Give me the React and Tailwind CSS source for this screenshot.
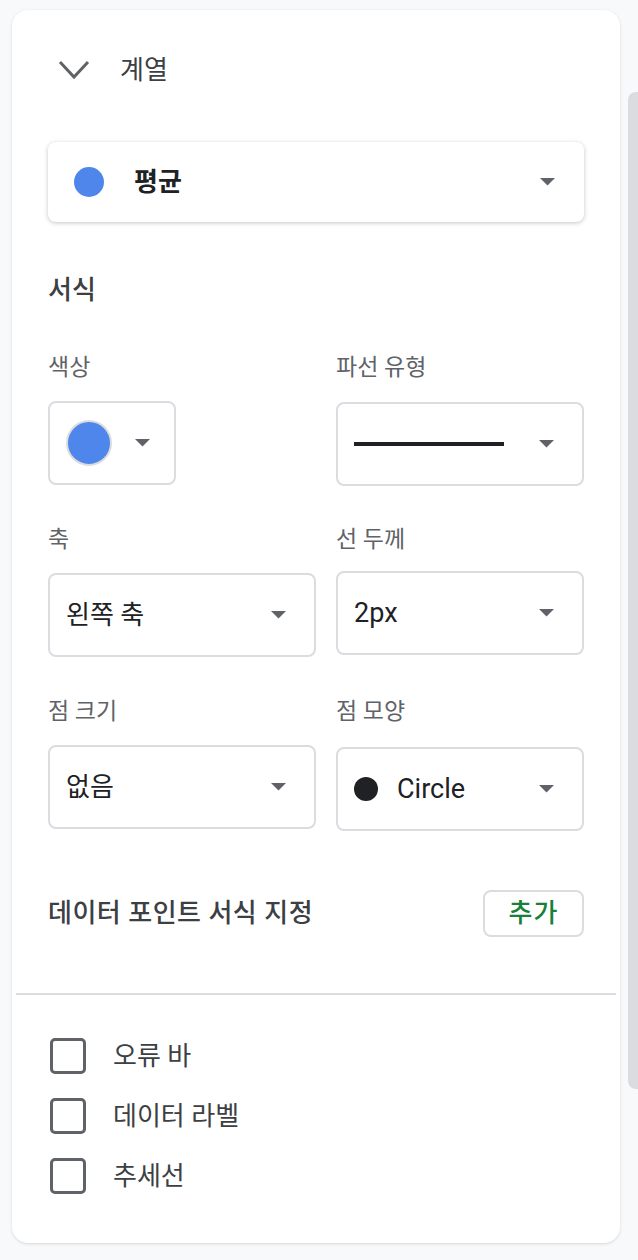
import React from "react";

const Tri = () => (
  <svg width="15" height="8" viewBox="0 0 15 8" className="shrink-0">
    <polygon points="0,0 15,0 7.5,7.5" fill="#5f6368" />
  </svg>
);

const Label = ({ children }) => (
  <div className="h-7 leading-7 text-[23px] text-[#5f6368]">{children}</div>
);

const Box = ({ children, className = "" }) => (
  <div
    className={`mt-[19px] h-[84px] rounded-lg border-2 border-[#dadce0] bg-white flex items-center ${className}`}
  >
    {children}
  </div>
);

const Check = ({ label }) => (
  <div className="flex items-center h-9">
    <div className="w-9 h-9 rounded-[5px] border-[3px] border-[#5f6368] shrink-0" />
    <span className="ml-[27px] text-[26px] text-[#3c4043]">{label}</span>
  </div>
);

export default function App() {
  return (
    <div
      className="min-h-screen bg-[#f8f9fa] flex"
      style={{ fontFamily: 'Roboto, "Noto Sans CJK KR", sans-serif' }}
    >
      <div className="ml-[12px] mt-[10px] w-[608px] h-[1233px] bg-white rounded-2xl shadow-[0_1px_3px_rgba(60,64,67,0.18)] flex flex-col">
        {/* header */}
        <div className="mt-[36px] h-12 flex items-center pl-[46px]">
          <svg width="32" height="20" viewBox="0 0 32 20">
            <path d="M2 2 L16 17 L30 2" fill="none" stroke="#5f6368" strokeWidth="3" />
          </svg>
          <span className="ml-[30px] text-[26px] text-[#3c4043]">계열</span>
        </div>

        {/* series dropdown */}
        <div className="mx-[36px] mt-[48px] h-[80px] rounded-lg bg-white shadow-[0_1px_4px_rgba(60,64,67,0.3)] flex items-center pl-[26px] pr-[29px]">
          <div className="w-[30px] h-[30px] rounded-full bg-[#4e86ec]" />
          <span className="ml-[30px] text-[26px] font-bold text-[#202124]">평균</span>
          <div className="flex-1" />
          <Tri />
        </div>

        {/* 서식 */}
        <div className="mx-[36px] mt-[52px] h-8 leading-8 text-[26px] font-medium text-[#3c4043]">
          서식
        </div>

        <div className="mx-[36px] mt-[48px] grid grid-cols-[268px_248px] gap-x-[20px] gap-y-[41px]">
          <div>
            <Label>색상</Label>
            <Box className="w-[128px] pl-[16px]">
              <div className="w-[46px] h-[46px] rounded-full bg-[#4e86ec] border-2 border-[#dcdcdc]" />
              <div className="ml-[23px]">
                <Tri />
              </div>
            </Box>
          </div>
          <div>
            <Label>파선 유형</Label>
            <Box className="pl-[16px] pr-[28px] translate-y-[1px]">
              <div className="w-[150px] h-[4px] bg-[#202124]" />
              <div className="flex-1" />
              <Tri />
            </Box>
          </div>

          <div>
            <Label>축</Label>
            <Box className="pl-[16px] pr-[28px]">
              <span className="text-[26px] text-[#202124]">왼쪽 축</span>
              <div className="flex-1" />
              <Tri />
            </Box>
          </div>
          <div>
            <Label>선 두께</Label>
            <Box className="pl-[16px] pr-[28px] -translate-y-[2px]">
              <span className="text-[27px] text-[#202124]">2px</span>
              <div className="flex-1" />
              <Tri />
            </Box>
          </div>

          <div>
            <Label>점 크기</Label>
            <Box className="pl-[16px] pr-[28px]">
              <span className="text-[26px] text-[#202124]">없음</span>
              <div className="flex-1" />
              <Tri />
            </Box>
          </div>
          <div>
            <Label>점 모양</Label>
            <Box className="pl-[16px] pr-[28px] translate-y-[2px]">
              <div className="w-6 h-6 rounded-full bg-[#202124]" />
              <span className="ml-[19px] text-[27px] text-[#202124]">Circle</span>
              <div className="flex-1" />
              <Tri />
            </Box>
          </div>
        </div>

        {/* data point format */}
        <div className="mx-[36px] mt-[61px] flex items-center justify-between">
          <span className="text-[26px] tracking-[0.5px] font-medium text-[#3c4043]">
            데이터 포인트 서식 지정
          </span>
          <div className="w-[101px] h-[47px] rounded-lg border-2 border-[#dadce0] flex items-center justify-center text-[26px] tracking-[1px] font-medium text-[#188038]">
            추가
          </div>
        </div>

        <div className="mx-[4px] mt-[56px] h-[2px] bg-[#dadce0]" />

        <div className="pl-[38px] mt-[43px] flex flex-col gap-6">
          <Check label="오류 바" />
          <Check label="데이터 라벨" />
          <Check label="추세선" />
        </div>
      </div>

      <div className="ml-[8px] mt-[92px] w-[10px] h-[997px] bg-[#dadce0] rounded-l-lg" />
    </div>
  );
}
